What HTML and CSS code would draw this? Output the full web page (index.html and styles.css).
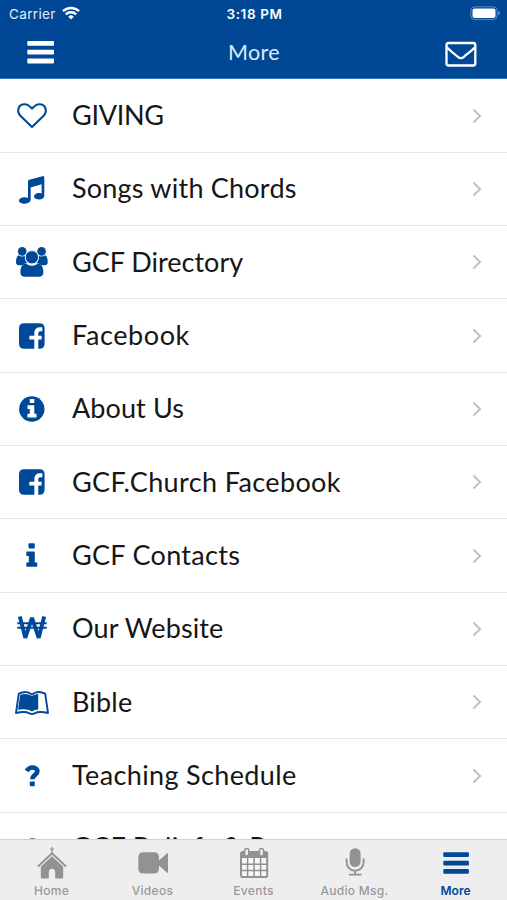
FILE: index.html
```
<!DOCTYPE html>
<html lang="en">
<head>
    <meta charset="UTF-8">
    <meta name="viewport" content="width=device-width, initial-scale=1.0">
    <title>More</title>
    <link rel="stylesheet" href="styles.css">
</head>
<body>

<header class="header">
    <div class="status-bar">
        <div class="carrier">
            <span>Carrier</span>
            <svg class="wifi" viewBox="0 0 18 14" fill="none" stroke="#fff" stroke-width="2.4">
                <path d="M1 5.2a11.5 11.5 0 0 1 16 0M3.8 8.3a7.5 7.5 0 0 1 10.4 0"/>
                <path d="M9 13.6L6.2 10.7a4 4 0 0 1 5.6 0z" fill="#fff" stroke="none"/>
            </svg>
        </div>
        <div class="time">3:18 PM</div>
        <svg class="battery" viewBox="0 0 30 15">
            <rect x=".8" y=".8" width="26.4" height="12.8" rx="4" fill="none" stroke="#6089bd" stroke-width="1"/>
            <rect x="2.5" y="2.5" width="23" height="9.4" rx="2.2" fill="#fff"/>
            <path d="M28.4 5v4.400a2.400 2.400 0 0 0 0-4.400z" fill="#7d9fca"/>
        </svg>
    </div>
    <div class="nav-bar">
        <svg class="menu" viewBox="0 0 28 24" fill="#fff">
            <rect x=".3" y="0" width="26.700" height="4.800" rx=".8"/>
            <rect x=".3" y="8.800" width="26.700" height="4.800" rx=".8"/>
            <rect x=".3" y="17.600" width="26.700" height="4.800" rx=".8"/>
        </svg>
        <h1>More</h1>
        <svg class="mail" viewBox="0 0 32 26" fill="none" stroke="#fff" stroke-width="2.3">
            <rect x="1.500" y="2" width="28.800" height="22.500" rx="2.2"/>
            <path d="M1.700 6c3.500 4 8 7 11.200 9.800 2.200 1.900 3.800 1.900 6 0C22 13 26.500 10 30.200 6"/>
        </svg>
    </div>
</header>

<main class="list">
    <a class="row">
        <svg class="icon" viewBox="0 0 40 40"><path d="M20 31L8.600 20C4.500 15.500 5.700 8.200 12.700 8.200c3.200 0 5.500 2.300 7.300 4.500 1.800-2.200 4.100-4.500 7.300-4.500 7 0 8.200 7.300 4.100 11.800z" fill="none" stroke="#004998" stroke-width="2.100" stroke-linejoin="round"/></svg>
        <span class="label giving">GIVING</span>
        <svg class="chevron" viewBox="0 0 10 16"><path d="M1.500 1.500L8 8l-6.500 6.500"/></svg>
    </a>
    <a class="row">
        <svg class="icon" viewBox="0 0 40 40"><path d="M16 12.300c0-.8.500-1.300 1.200-1.500L30.500 7.200c1-.3 1.800.3 1.800 1.300v18.200c0 2.300-2.600 3.800-5.200 3.800S22 29.400 22 27.500s2.400-3.400 5.100-3.400c1 0 1.800.1 2.500.5v-9.300L18.700 18.600v12.200c0 2.300-2.900 3.900-5.900 3.900S7 33.500 7 31.700s2.600-3.400 5.800-3.400c1.200 0 2.300.2 3.200.7z"/></svg>
        <span class="label songs">Songs with Chords</span>
        <svg class="chevron" viewBox="0 0 10 16"><path d="M1.500 1.500L8 8l-6.500 6.500"/></svg>
    </a>
    <a class="row">
        <svg class="icon" viewBox="0 0 40 40">
            <circle cx="10.200" cy="9.400" r="4.300"/>
            <circle cx="29.600" cy="9.400" r="4.300"/>
            <path d="M6.500 13.300c2 1.500 5 1.500 6.600.4 0 3.500.7 5.600 2.100 7.300-2 .2-3.500 1-4.800 2.200H6.800C5 23.200 4 22 4 20.300c0-3 .5-6 2.500-7zM33.200 13.300c-2 1.500-5 1.500-6.600.4 0 3.500-.7 5.600-2.100 7.300 2 .2 3.500 1 4.800 2.200h3.600c1.800 0 2.800-1.200 2.800-2.900 0-3-.5-6-2.500-7z"/>
            <circle cx="19.900" cy="15.300" r="6.700" stroke="#fff" stroke-width="1"/>
            <path d="M14 21.500c3.500 3 8.300 3 11.800 0 3.600.1 5.600 3.700 5.600 9 0 2.600-1.600 4.200-4.200 4.200H12.600c-2.600 0-4.200-1.600-4.200-4.200 0-5.300 2-8.900 5.600-9z"/>
        </svg>
        <span class="label directory">GCF Directory</span>
        <svg class="chevron" viewBox="0 0 10 16"><path d="M1.500 1.500L8 8l-6.500 6.500"/></svg>
    </a>
    <a class="row">
        <svg class="icon" viewBox="0 0 40 40">
            <rect x="7" y="7.200" width="25.600" height="25.600" rx="4.800"/>
            <path d="M24.300 33.500V17q0-3.800 4-3.800h2M17.300 21.600h12.300" fill="none" stroke="#fff" stroke-width="3.900"/>
        </svg>
        <span class="label facebook">Facebook</span>
        <svg class="chevron" viewBox="0 0 10 16"><path d="M1.500 1.500L8 8l-6.500 6.500"/></svg>
    </a>
    <a class="row">
        <svg class="icon" viewBox="0 0 40 40">
            <circle cx="19.800" cy="20" r="12.700"/>
            <path d="M17.800 10h4.500v4h-4.500zM15.500 16.200h6.800v8.600h2.200V28.500h-9v-3.700h2.300v-4.900h-2.300z" fill="#fff"/>
        </svg>
        <span class="label about">About Us</span>
        <svg class="chevron" viewBox="0 0 10 16"><path d="M1.500 1.500L8 8l-6.500 6.500"/></svg>
    </a>
    <a class="row">
        <svg class="icon" viewBox="0 0 40 40">
            <rect x="7" y="7.200" width="25.600" height="25.600" rx="4.800"/>
            <path d="M24.300 33.500V17q0-3.800 4-3.800h2M17.300 21.600h12.300" fill="none" stroke="#fff" stroke-width="3.900"/>
        </svg>
        <span class="label church">GCF.Church Facebook</span>
        <svg class="chevron" viewBox="0 0 10 16"><path d="M1.500 1.500L8 8l-6.500 6.500"/></svg>
    </a>
    <a class="row">
        <svg class="icon" viewBox="0 0 40 40">
            <rect x="16.500" y="7.300" width="6.300" height="5.200" rx="1"/>
            <path d="M15.300 15.600h6.500c.6 0 1 .4 1 1v9.900h1.500c.6 0 1 .4 1 1v2.200c0 .6-.4 1-1 1h-9c-.6 0-1-.4-1-1v-2.200c0-.6.4-1 1-1h1.500v-6.600h-1.500c-.6 0-1-.4-1-1v-2.300c0-.6.4-1 1-1z"/>
        </svg>
        <span class="label contacts">GCF Contacts</span>
        <svg class="chevron" viewBox="0 0 10 16"><path d="M1.500 1.500L8 8l-6.500 6.500"/></svg>
    </a>
    <a class="row">
        <svg class="icon" viewBox="0 0 40 40" stroke="#004998">
            <path class="line" d="M7.800 7.500l5.500 21.300L20 8.800l6.700 20L32.200 7.500" stroke-width="3.900" stroke-linejoin="bevel"/>
            <path class="line" d="M5.300 14.300h29.400M5.300 18.700h29.400" stroke-width="1.900"/>
        </svg>
        <span class="label website">Our Website</span>
        <svg class="chevron" viewBox="0 0 10 16"><path d="M1.500 1.500L8 8l-6.500 6.500"/></svg>
    </a>
    <a class="row">
        <svg class="icon" viewBox="0 0 40 40">
            <path d="M6.800 11.700c4.200-2 9.600-2 13.200.7 3.600-2.700 9-2.700 13.200-.7L36 31c-5.500-1.300-10.500-1.200-13.500.4-1.600.8-3.400.8-5 0-3-1.600-8-1.700-13.500-.4z" fill="#fff" stroke="#004998" stroke-width="1.900" stroke-linejoin="round"/>
            <path d="M8.200 12.700c4-1.300 8.500-1.100 11.800 1.400 1.800-1.300 3.800-1.900 6.200-2.200v15.600c-2.600.1-4.700.8-6.200 2-3.800-2.600-8.900-2.800-14-1.700z"/>
        </svg>
        <span class="label bible">Bible</span>
        <svg class="chevron" viewBox="0 0 10 16"><path d="M1.500 1.500L8 8l-6.500 6.500"/></svg>
    </a>
    <a class="row">
        <svg class="icon" viewBox="0 0 40 40">
            <path d="M14.700 15c1.500-2.300 3.300-3.500 5.700-3.500 2.700 0 5 1.500 5 3.800 0 3.700-5 3.600-5 8" fill="none" stroke="#004998" stroke-width="4.600"/>
            <rect x="17.800" y="25.500" width="5" height="4.800" rx=".8"/>
        </svg>
        <span class="label teaching">Teaching Schedule</span>
        <svg class="chevron" viewBox="0 0 10 16"><path d="M1.500 1.500L8 8l-6.500 6.500"/></svg>
    </a>
    <a class="row">
        <svg class="icon" viewBox="0 0 40 40">
            <path d="M14.700 15c1.500-2.300 3.300-3.500 5.700-3.500 2.700 0 5 1.500 5 3.800 0 3.700-5 3.600-5 8" fill="none" stroke="#004998" stroke-width="4.600"/>
            <rect x="17.800" y="25.500" width="5" height="4.800" rx=".8"/>
        </svg>
        <span class="label beliefs">GCF Beliefs &amp; Purpose</span>
        <svg class="chevron" viewBox="0 0 10 16"><path d="M1.500 1.500L8 8l-6.500 6.500"/></svg>
    </a>
</main>

<nav class="tab-bar">
    <a class="tab">
        <svg viewBox="0 0 34 34">
            <path d="M17 1v8M15.200 3.200h3.600" fill="none" stroke="#929292" stroke-width="1.200"/>
            <path d="M3 20.500L17 7.200l14 13.300" fill="none" stroke="#929292" stroke-width="1.900"/>
            <path d="M17 10.300l11.200 10.500v10.700c0 .6-.4 1-1 1h-7V26c0-2-1.200-3.300-3.200-3.300s-3.200 1.300-3.200 3.300v6.500h-7c-.6 0-1-.4-1-1V20.800z"/>
        </svg>
        <span>Home</span>
    </a>
    <a class="tab">
        <svg viewBox="0 0 34 34">
            <rect x="2.300" y="6.300" width="20.600" height="21.300" rx="4.500"/>
            <path d="M22 15.200l9.200-8c.4-.3.800-.2.800.4v18.800c0 .6-.4.700-.8.400L22 18.800z"/>
        </svg>
        <span>Videos</span>
    </a>
    <a class="tab">
        <svg viewBox="0 0 34 34">
            <rect x="4" y="6" width="26.200" height="25" rx="1.800" fill="#f7f7f7" stroke="#929292" stroke-width="2"/>
            <path d="M4 6h26v6H4z"/>
            <path d="M4 18.300h26M4 24.600h26M10.600 12v18M17.100 12v18M23.600 12v18" fill="none" stroke="#929292" stroke-width="1.500"/>
            <rect x="7.700" y="2.500" width="4" height="7.500" rx="2" fill="#efefef" stroke="#929292" stroke-width="1.500"/>
            <rect x="22.500" y="2.500" width="4" height="7.500" rx="2" fill="#efefef" stroke="#929292" stroke-width="1.500"/>
        </svg>
        <span>Events</span>
    </a>
    <a class="tab">
        <svg viewBox="0 0 34 34">
            <rect x="11.600" y="2.200" width="11" height="18.800" rx="5.500"/>
            <path d="M8.600 13.200v3a8.500 8.500 0 0 0 17 0v-3M17.100 24.700v3.500M11.500 28.600h11.300" fill="none" stroke="#929292" stroke-width="1.900" stroke-linecap="round"/>
        </svg>
        <span>Audio Msg.</span>
    </a>
    <a class="tab active">
        <svg viewBox="0 0 34 34">
            <rect x="4.300" y="6.300" width="25.600" height="4.800" rx="1"/>
            <rect x="4.300" y="14.700" width="25.600" height="4.800" rx="1"/>
            <rect x="4.300" y="23" width="25.600" height="4.800" rx="1"/>
        </svg>
        <span>More</span>
    </a>
</nav>

</body>
</html>
```
FILE: styles.css
```
* {
    box-sizing: border-box;
}

body {
    font-family: Lato, sans-serif;
    display: flex;
    flex-direction: column;
    height: 900px;
    margin: 0;
    overflow: hidden;
    background: #fff;
}

/* Header */
.header {
    height: 79px;
    flex: none;
    background: #004896;
    color: #fff;
    border-bottom: 1px solid #2f76b8;
}

.status-bar {
    display: grid;
    grid-template-columns: 1fr auto 1fr;
    align-items: center;
    height: 27px;
    padding: 0 7px 0 9px;
    font-family: Inter, sans-serif;
    font-size: 13.5px;
}

.carrier {
    display: flex;
    align-items: center;
    gap: 6px;
    letter-spacing: 0.35px;
    color: #e4edf8;
}

.wifi {
    width: 18px;
    height: 14px;
    margin-bottom: 2px;
}

.time {
    font-weight: 600;
    font-size: 13.5px;
    letter-spacing: 0.6px;
}

.battery {
    width: 30px;
    height: 15px;
    justify-self: end;
}

.nav-bar {
    display: grid;
    grid-template-columns: 1fr auto 1fr;
    align-items: center;
    height: 51px;
    padding: 0 29px 0 27px;
}

.menu {
    width: 28px;
    height: 24px;
}

.mail {
    width: 32px;
    height: 26px;
    margin-top: 2px;
    margin-right: 1px;
    justify-self: end;
}

h1 {
    margin: -2px 0 0 3px;
    font-size: 21.5px;
    font-weight: 400;
    letter-spacing: 0.4px;
    color: #dfeaf7;
}

/* List */
.list {
    flex: 1;
    min-height: 0;
    padding-top: 0.5px;
    overflow: hidden;
}

.row {
    display: flex;
    align-items: center;
    height: 73.33px;
    padding: 0 25px 0 12px;
    border-bottom: 1px solid #e9e9e9;
}

.icon {
    width: 40px;
    height: 40px;
    flex: none;
    fill: #004998;
}

.line {
    fill: none;
}

.label {
    flex: 1;
    margin: -1px 0 0 20px;
    font-size: 27px;
    line-height: 36px;
    white-space: nowrap;
    color: #161616;
}

.giving {
    letter-spacing: -0.3px;
}

.songs {
    letter-spacing: 0.22px;
}

.facebook {
    letter-spacing: 0.6px;
}

.about {
    letter-spacing: 0.1px;
}

.church {
    letter-spacing: 0.38px;
}

.contacts {
    letter-spacing: 0.3px;
}

.website {
    letter-spacing: 0.12px;
}

.bible {
    letter-spacing: 0.2px;
}

.teaching {
    letter-spacing: 0.37px;
}

.beliefs {
    margin-top: -4px;
    letter-spacing: 0.37px;
}

.chevron {
    width: 10px;
    height: 16px;
    fill: none;
    stroke: #c2c2c4;
    stroke-width: 2;
}

/* Tab bar */
.tab-bar {
    display: grid;
    grid-template-columns: repeat(5, 101px);
    flex: none;
    height: 61px;
    background: #eee;
    border-top: 1px solid #d2d2d2;
}

.tab {
    display: flex;
    flex-direction: column;
    align-items: center;
    padding-top: 6px;
    font-family: Inter, sans-serif;
    font-size: 12px;
    font-weight: 500;
    line-height: 16px;
    letter-spacing: 0.3px;
    color: #999;
    fill: #929292;
}

.tab svg {
    width: 34px;
    height: 34px;
    margin-bottom: 3px;
    margin-left: 2px;
}

.tab span {
    margin-left: 2px;
}

.active {
    color: #004998;
    fill: #004998;
    font-weight: 600;
    letter-spacing: 0;
}
```
